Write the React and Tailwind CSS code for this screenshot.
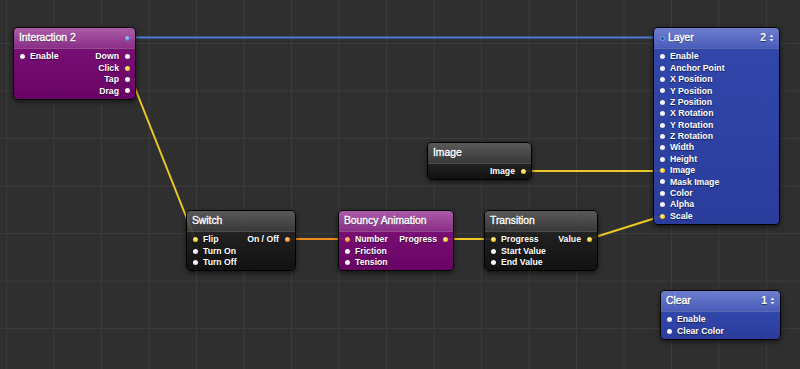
import React from "react";

const FONT = { fontFamily: '"Liberation Sans", Arial, sans-serif' };

function Dot({ c = "white" }) {
  const cls =
    c === "yellow"
      ? "bg-[radial-gradient(circle_at_40%_35%,#fff3a0,#f0cc2a_60%,#c9a410)]"
      : c === "orange"
      ? "bg-[radial-gradient(circle_at_40%_35%,#ffd09a,#f3901f_60%,#c86a0c)]"
      : c === "blue"
      ? "bg-[radial-gradient(circle_at_40%_35%,#b8d0ff,#4f82dc_60%,#2c5cb8)]"
      : "bg-[radial-gradient(circle_at_40%_35%,#ffffff,#f2f2f2_55%,#bdbdbd)]";
  return <span className={`block w-[5px] h-[5px] rounded-full shrink-0 ${cls}`} />;
}

function Arrows() {
  return (
    <svg width="5" height="8" viewBox="0 0 5 8" className="block">
      <path d="M2.5 0.5 L4.5 3 H0.5 Z" fill="#e8ecff" />
      <path d="M2.5 7.5 L4.5 5 H0.5 Z" fill="#e8ecff" />
    </svg>
  );
}

const VARIANTS = {
  purple: {
    header: "bg-[linear-gradient(to_bottom,rgba(178,94,174,0.95),rgba(146,46,142,0.93))]",
    body: "bg-[linear-gradient(to_bottom,rgba(126,12,122,0.93),rgba(108,0,104,0.93))]",
  },
  blue: {
    header: "bg-[linear-gradient(to_bottom,rgba(112,130,214,0.95),rgba(76,96,196,0.93))]",
    body: "bg-[linear-gradient(to_bottom,rgba(50,72,180,0.93),rgba(42,62,164,0.93))]",
  },
  dark: {
    header: "bg-[linear-gradient(to_bottom,rgba(94,94,94,0.9),rgba(58,58,58,0.88))]",
    body: "bg-[linear-gradient(to_bottom,rgba(32,32,32,0.9),rgba(14,14,14,0.92))]",
  },
};

function Node({ pos, variant, title, inputs = [], outputs = [], headerRight, headerOutPort, headerInPort }) {
  const v = VARIANTS[variant];
  return (
    <div
      className={`absolute ${pos} rounded-[5px] border border-black overflow-hidden shadow-[0_2px_5px_rgba(0,0,0,0.55)] text-white [text-shadow:0_1px_1px_rgba(0,0,0,0.55)]`}
      style={FONT}
    >
      <div className={`h-[21px] flex items-center ${v.header} border-b border-[rgba(0,0,0,0.15)]`}>
        {headerInPort && (
          <span className="ml-[5.5px] mr-[3.5px] block w-[5px] h-[5px] rounded-full border border-[#7fa4ee] bg-[#2e4cb0]" />
        )}
        <span className={`${headerInPort ? "" : "pl-[5px]"} text-[10.3px] leading-none [-webkit-text-stroke:0.35px_#ffffff]`}>{title}</span>
        <span className="flex-1" />
        {headerRight && (
          <span className="flex items-center gap-[3px] pr-[5px] text-[10.3px] leading-none font-bold">
            {headerRight}
            <Arrows />
          </span>
        )}
        {headerOutPort && (
          <span className="pr-[5.5px]">
            <Dot c="blue" />
          </span>
        )}
      </div>
      <div className={`flex justify-between pt-[2px] pb-[2px] ${v.body}`}>
        <div className="flex flex-col pl-[5.5px]">
          {inputs.map((r) => (
            <div key={r.l} className="h-[11.4px] flex items-center gap-[5.5px] text-[8.7px] font-bold leading-none whitespace-nowrap">
              <Dot c={r.c} />
              <span>{r.l}</span>
            </div>
          ))}
        </div>
        <div className="flex flex-col items-end pr-[5.5px]">
          {outputs.map((r) => (
            <div key={r.l} className="h-[11.4px] flex items-center gap-[5.5px] text-[8.7px] font-bold leading-none whitespace-nowrap">
              <span>{r.l}</span>
              <Dot c={r.c} />
            </div>
          ))}
        </div>
      </div>
    </div>
  );
}

export default function App() {
  const layerRows = [
    "Enable",
    "Anchor Point",
    "X Position",
    "Y Position",
    "Z Position",
    "X Rotation",
    "Y Rotation",
    "Z Rotation",
    "Width",
    "Height",
    "Image",
    "Mask Image",
    "Color",
    "Alpha",
    "Scale",
  ].map((l) => ({ l, c: l === "Image" || l === "Scale" ? "yellow" : "white" }));

  return (
    <div className="relative w-[800px] h-[369px] overflow-hidden bg-[#2f2f2f] bg-[linear-gradient(to_right,#3b3b3b_1px,transparent_1px),linear-gradient(to_bottom,#3b3b3b_1px,transparent_1px)] bg-[size:47.5px_47.5px] bg-[position:6px_43px]">
      <svg className="absolute inset-0" width="800" height="369" viewBox="0 0 800 369">
        <line x1="127" y1="37.5" x2="662" y2="37.5" stroke="#4b7bd2" strokeWidth="2" />
        <line x1="127" y1="68" x2="195" y2="239" stroke="#ecc925" strokeWidth="2" />
        <line x1="287" y1="239" x2="347" y2="239" stroke="#f08c1c" strokeWidth="2" />
        <line x1="445" y1="239" x2="494" y2="239" stroke="#ecc925" strokeWidth="2" />
        <line x1="523" y1="171" x2="662" y2="171" stroke="#ecc925" strokeWidth="2" />
        <line x1="589" y1="239" x2="662" y2="216" stroke="#ecc925" strokeWidth="2" />
      </svg>

      <Node
        pos="left-[13px] top-[27px] w-[123px]"
        variant="purple"
        title="Interaction 2"
        headerOutPort
        inputs={[{ l: "Enable" }]}
        outputs={[{ l: "Down" }, { l: "Click", c: "yellow" }, { l: "Tap" }, { l: "Drag" }]}
      />

      <Node
        pos="left-[653px] top-[27px] w-[127px]"
        variant="blue"
        title="Layer"
        headerInPort
        headerRight="2"
        inputs={layerRows}
      />

      <Node
        pos="left-[427px] top-[142px] w-[105px]"
        variant="dark"
        title="Image"
        outputs={[{ l: "Image", c: "yellow" }]}
      />

      <Node
        pos="left-[186px] top-[210px] w-[110px]"
        variant="dark"
        title="Switch"
        inputs={[{ l: "Flip", c: "yellow" }, { l: "Turn On" }, { l: "Turn Off" }]}
        outputs={[{ l: "On / Off", c: "orange" }]}
      />

      <Node
        pos="left-[338px] top-[210px] w-[116px]"
        variant="purple"
        title="Bouncy Animation"
        inputs={[{ l: "Number", c: "orange" }, { l: "Friction" }, { l: "Tension" }]}
        outputs={[{ l: "Progress", c: "yellow" }]}
      />

      <Node
        pos="left-[484px] top-[210px] w-[114px]"
        variant="dark"
        title="Transition"
        inputs={[{ l: "Progress", c: "yellow" }, { l: "Start Value" }, { l: "End Value" }]}
        outputs={[{ l: "Value", c: "yellow" }]}
      />

      <Node
        pos="left-[660px] top-[290px] w-[121px]"
        variant="blue"
        title="Clear"
        headerRight="1"
        inputs={[{ l: "Enable" }, { l: "Clear Color" }]}
      />
    </div>
  );
}
